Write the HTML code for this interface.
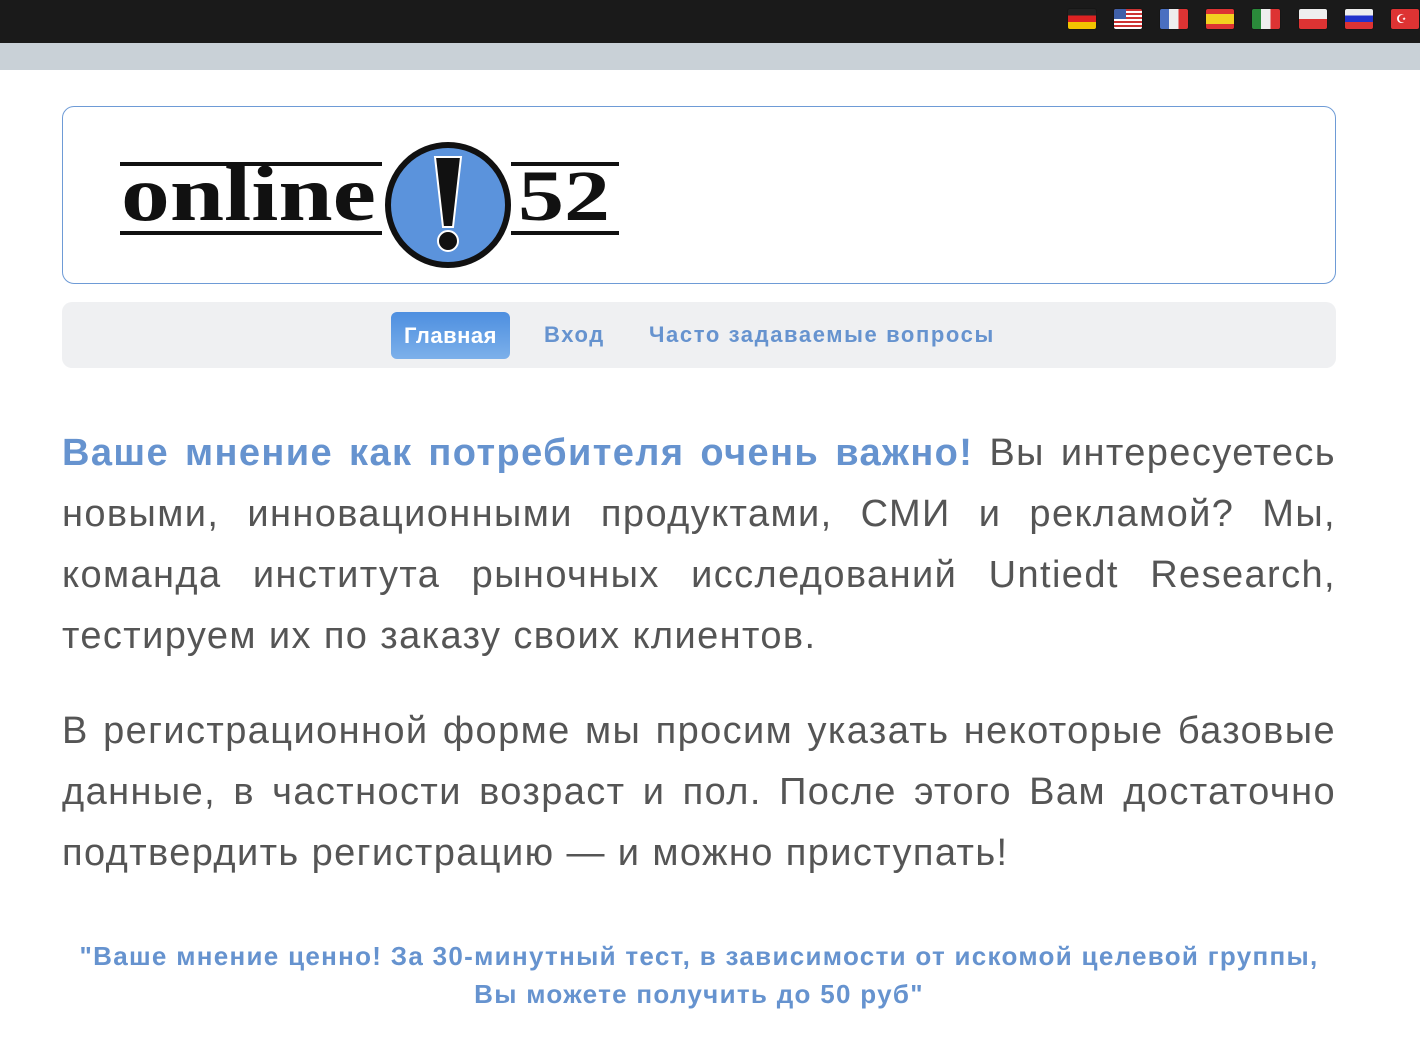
<!DOCTYPE html>
<html><head><meta charset="utf-8"><style>
*{margin:0;padding:0;box-sizing:border-box}
body{width:1420px;height:1037px;background:#fff;font-family:"Liberation Sans",Arial,sans-serif;overflow:hidden;position:relative}
.top{position:absolute;left:0;top:0;width:1420px;height:43px;background:#1a1a1a}
.gray{position:absolute;left:0;top:43px;width:1420px;height:27px;background:#c9d1d7}
.flag{position:absolute;top:9px;width:28px;height:20px;border-radius:2px;overflow:hidden;box-shadow:0 0 1px #000}
.logo{position:absolute;left:62px;top:106px;width:1274px;height:178px;border:1.5px solid #6e9bd6;border-radius:12px}
.nav{position:absolute;left:62px;top:302px;width:1274px;height:66px;background:#eff0f2;border-radius:10px}
.nav a{position:absolute;top:20px;font-size:22px;font-weight:bold;color:#6693cf;text-decoration:none;letter-spacing:1.6px}
.nav .act{position:absolute;left:329px;top:10px;width:119px;height:47px;border-radius:6px;background:linear-gradient(#4e8fe0,#7cb0ea);color:#fff;font-size:22px;font-weight:bold;text-align:center;line-height:47px;letter-spacing:0.5px}
.p{position:absolute;left:62px;width:1274px;font-size:38px;line-height:61px;color:#555;text-align:justify;letter-spacing:1.4px}
.p b{color:#6693cf}
.q{position:absolute;left:40px;top:937px;width:1318px;text-align:center;font-size:26px;line-height:38px;font-weight:bold;color:#6693cf;letter-spacing:1.3px}
</style></head><body>
<div class="top"></div><div class="gray"></div>
<div class="flag" style="left:1068px;background:linear-gradient(#222 33%,#d22 33% 66%,#f2c200 66%)"></div>
<div class="flag" style="left:1114px;background:repeating-linear-gradient(#c33 0 2px,#fff 2px 4px)"><div style="width:12px;height:10px;background:#4060a8"></div></div>
<div class="flag" style="left:1160px;background:linear-gradient(90deg,#4a6fc0 33%,#eee 33% 66%,#d33 66%)"></div>
<div class="flag" style="left:1206px;background:linear-gradient(#d33 25%,#f2d020 25% 75%,#d33 75%)"></div>
<div class="flag" style="left:1252px;background:linear-gradient(90deg,#2a8a3a 33%,#eee 33% 66%,#d33 66%)"></div>
<div class="flag" style="left:1299px;background:linear-gradient(#eee 50%,#d33 50%)"></div>
<div class="flag" style="left:1345px;background:linear-gradient(#eee 33%,#2233cc 33% 66%,#d33 66%)"></div>
<div class="flag" style="left:1391px;background:#d33;color:#fff;font-size:12px;line-height:20px;padding-left:5px">☪</div>
<div class="logo">
<svg width="600" height="178" style="position:absolute;left:0;top:0">
<rect x="57" y="55" width="262" height="4" fill="#111"/>
<rect x="57" y="124" width="262" height="4" fill="#111"/>
<rect x="448" y="55" width="108" height="4" fill="#111"/>
<rect x="448" y="124" width="108" height="4" fill="#111"/>
<text x="58" y="113" font-family="Liberation Serif,serif" font-weight="bold" font-size="78" fill="#111" textLength="255" lengthAdjust="spacingAndGlyphs">online</text>
<text x="455" y="113" font-family="Liberation Serif,serif" font-weight="bold" font-size="72" fill="#111" textLength="92" lengthAdjust="spacingAndGlyphs">52</text>
<circle cx="385" cy="98" r="60" fill="#5b93dc" stroke="#111" stroke-width="6"/>
<path d="M372 50 L398 50 L390 120 L380 120 Z" fill="#111" stroke="#fff" stroke-width="2"/>
<circle cx="385" cy="134" r="10" fill="#111" stroke="#fff" stroke-width="2"/>
</svg>
</div>
<div class="nav">
<div class="act">Главная</div>
<a style="left:482px">Вход</a>
<a style="left:587px">Часто задаваемые вопросы</a>
</div>
<div class="p" style="top:423px"><b>Ваше мнение как потребителя очень важно!</b> Вы интересуетесь новыми, инновационными продуктами, СМИ и рекламой? Мы, команда института рыночных исследований Untiedt Research, тестируем их по заказу своих клиентов.</div>
<div class="p" style="top:701px">В регистрационной форме мы просим указать некоторые базовые данные, в частности возраст и пол. После этого Вам достаточно подтвердить регистрацию — и можно приступать!</div>
<div class="q">"Ваше мнение ценно! За 30-минутный тест, в зависимости от искомой целевой группы,<br>Вы можете получить до 50 руб"</div>
</body></html>
